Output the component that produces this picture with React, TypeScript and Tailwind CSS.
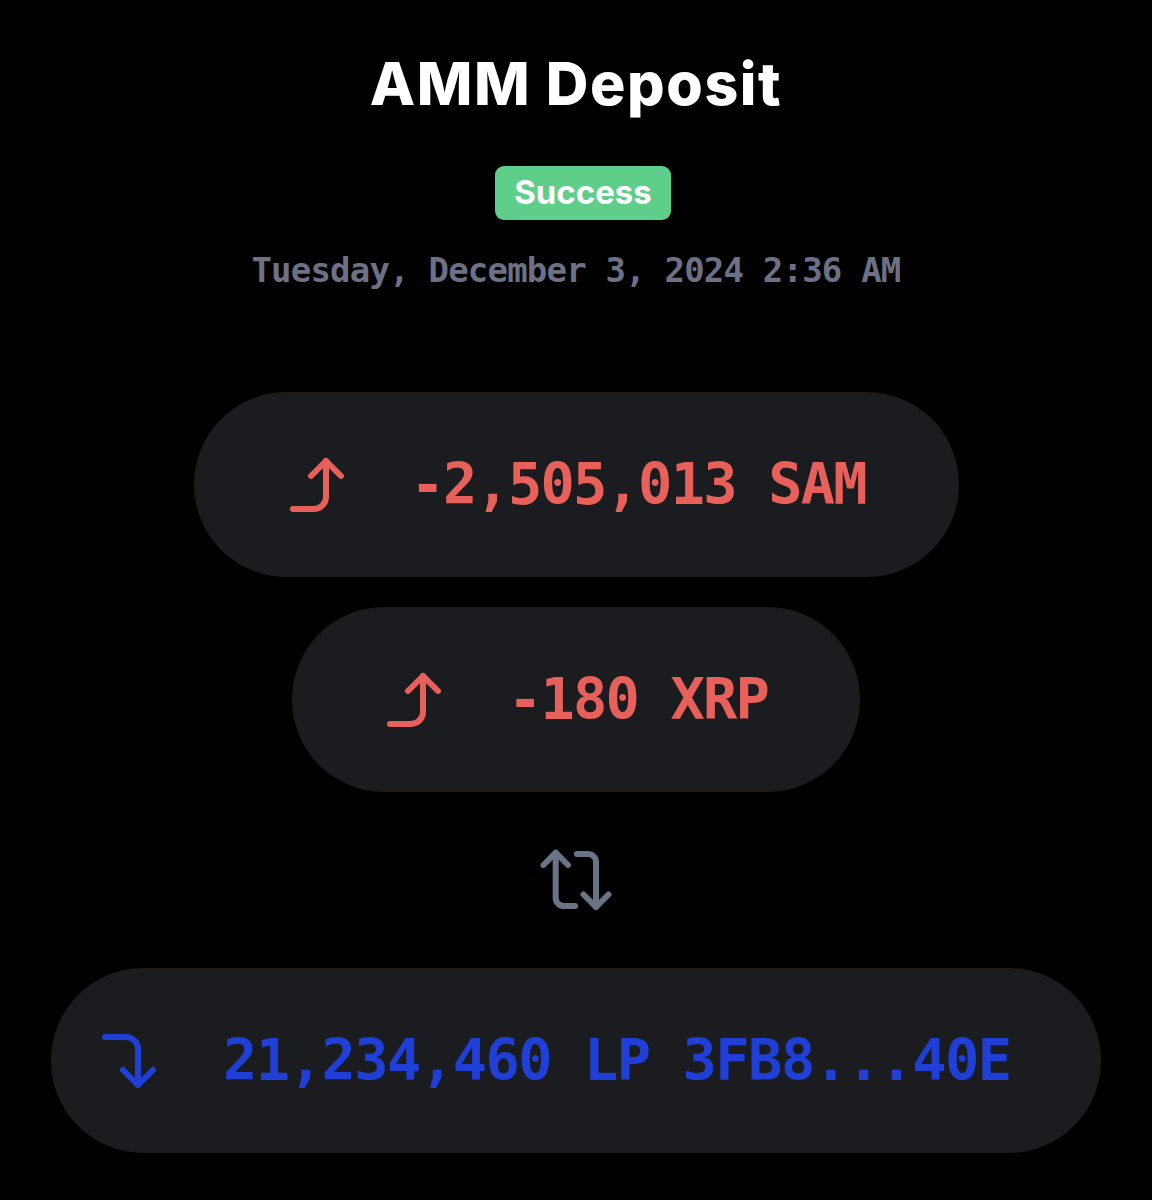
import React from 'react'

const mono = { fontFamily: '"DejaVu Sans Mono", "Liberation Mono", monospace' }

function CornerUp({ className }: { className?: string }) {
  return (
    <svg viewBox="0 0 24 24" width="72" height="72" fill="none" stroke="currentColor" strokeWidth="2" strokeLinecap="round" strokeLinejoin="round" className={className}>
      <path d="m10 9 5-5 5 5" />
      <path d="M4 20h7a4 4 0 0 0 4-4V4" />
    </svg>
  )
}

function CornerDown({ className }: { className?: string }) {
  return (
    <svg viewBox="0 0 24 24" width="72" height="72" fill="none" stroke="currentColor" strokeWidth="2" strokeLinecap="round" strokeLinejoin="round" className={className}>
      <path d="m10 15 5 5 5-5" />
      <path d="M4 4h7a4 4 0 0 1 4 4v12" />
    </svg>
  )
}

function Swap() {
  return (
    <svg viewBox="0 0 72 72" width="72" height="72" fill="none" stroke="currentColor" strokeWidth="6" strokeLinecap="round" strokeLinejoin="round" className="text-[#6b7386]">
      <path d="M3.5 19 15.7 6.7 28 19" />
      <path d="M15.7 7v45a8 8 0 0 0 8 8H35" />
      <path d="M37 8h11a8 8 0 0 1 8 8v45" />
      <path d="M43.5 48.5 56 61l12.5-12.5" />
    </svg>
  )
}

function Pill({ children, className }: { children: React.ReactNode; className?: string }) {
  return (
    <div className={`flex h-[185px] items-center gap-[58px] rounded-full bg-[#1b1c20] ${className ?? ''}`}>
      {children}
    </div>
  )
}

export default function App() {
  return (
    <div className="flex min-h-[1200px] w-full flex-col items-center bg-black pt-[54px]" style={{ fontFamily: 'Inter, "Noto Sans", sans-serif' }}>
      <h1 className="text-[59px] font-extrabold leading-none tracking-[1.6px] text-white">AMM Deposit</h1>

      <div className="ml-[14px] mt-[53px] flex h-[54px] w-[176px] items-center justify-center rounded-[9px] bg-[#5fce8a] text-[33px] font-bold text-white">
        Success
      </div>

      <div className="mt-[33px] text-[34px] font-bold leading-none tracking-[-0.8px] text-[#6c7186]" style={mono}>
        Tuesday, December 3, 2024 2:36 AM
      </div>

      <div className="mt-[105px] flex flex-col items-center gap-[30px]">
        <Pill className="w-[765px] pl-[87px] pr-[88px] text-[#e8605a]">
          <CornerUp />
          <span className="whitespace-nowrap text-[57px] font-bold leading-none tracking-[-1.8px]" style={mono}>-2,505,013 SAM</span>
        </Pill>
        <Pill className="w-[568px] pl-[86px] pr-[88px] text-[#e8605a]">
          <CornerUp />
          <span className="whitespace-nowrap text-[57px] font-bold leading-none tracking-[-1.8px]" style={mono}>-180 XRP</span>
        </Pill>
      </div>

      <div className="mt-[54px]">
        <Swap />
      </div>

      <Pill className="mt-[50px] w-[1050px] pl-[42px] pr-[60px] text-[#1f3fd6]">
        <CornerDown />
        <span className="whitespace-nowrap text-[57px] font-bold leading-none tracking-[-1.5px]" style={mono}>21,234,460 LP 3FB8...40E</span>
      </Pill>
    </div>
  )
}
